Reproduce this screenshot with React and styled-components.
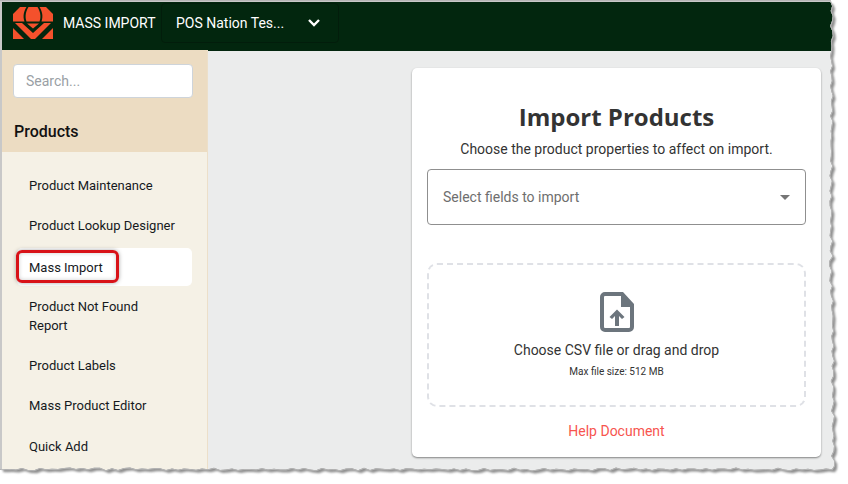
import React from "react";
import styled, { createGlobalStyle } from "styled-components";

const menuItems = [
  { label: "Product Maintenance" },
  { label: "Product Lookup Designer" },
  { label: "Mass Import", active: true },
  { label: "Product Not Found\nReport" },
  { label: "Product Labels" },
  { label: "Mass Product Editor" },
  { label: "Quick Add" },
];

// rough torn paper outline, same shape on every render
const jag = (i, size) => (Math.sin(i * 12.9898) * 43758.5453 % 1) * size;

const tornOutline = () => {
  const points = ["0,1", "830,1"];
  for (let y = 6; y < 468; y += 5) {
    const drift = y > 300 ? 1.5 : 0;
    points.push(`${(831 + drift + jag(y, 1.8)).toFixed(1)},${y}`);
  }
  for (let x = 832; x > 0; x -= 6) {
    points.push(`${x},${(469 + jag(x + 3, 1.4)).toFixed(1)}`);
  }
  points.push("0,469");
  return `M${points.join("L")}Z`;
};

const outline = tornOutline();

const GlobalStyle = createGlobalStyle`
  html, body {
    margin: 0;
    padding: 0;
    background: #fff;
    overflow: hidden;
  }
  body {
    font-family: Roboto, "Liberation Sans", sans-serif;
  }
`;

const Logo = () => (
  <svg width="40" height="32" viewBox="0 0 40 32" aria-hidden="true">
    <g fill="#f4512c">
      <path d="M7 0h6.500C11 4 9.500 9 11.500 14.500H0V7z" />
      <path d="M15.500 0h9C27 4 28.500 9 26.500 14.500h-13C11.500 9 13 4 15.500 0z" />
      <path d="M33 0h-6.500C29 4 30.500 9 28.500 14.500H40V7z" />
      <path d="M14 16.500h12l-6 5z" />
      <path d="M2 16h7l11 10 11-10h7L22 32h-4z" />
      <path d="M0 21l11 11H0z" />
      <path d="M40 21v11H29z" />
    </g>
  </svg>
);

const FileUpload = () => (
  <svg width="34" height="40" viewBox="0 0 34 40" aria-hidden="true">
    <path
      fill="#6c757d"
      fillRule="evenodd"
      d="M5 0h18l11 12v23a5 5 0 0 1-5 5H5a5 5 0 0 1-5-5V5a5 5 0 0 1 5-5zM5 4a1 1 0 0 0-1 1v30a1 1 0 0 0 1 1h24a1 1 0 0 0 1-1V15h-9V4z"
    />
    <path fill="#6c757d" d="M17 17.500l7.500 7.500-2.500 2-3-3v10h-4V24l-3 3-2.500-2z" />
  </svg>
);

const App = () => (
  <Page>
    <GlobalStyle />
    <Shot>
      <Header>
        <LogoWrap>
          <Logo />
        </LogoWrap>
        <PageName>MASS IMPORT</PageName>
        <StoreSelect>
          <span>POS Nation Tes...</span>
          <svg width="14" height="10" viewBox="0 0 14 10" aria-hidden="true">
            <path d="M2 2l5 5 5-5" fill="none" stroke="#fff" strokeWidth="2.400" />
          </svg>
        </StoreSelect>
      </Header>
      <Body>
        <Sidebar>
          <SideTop>
            <Search placeholder="Search..." />
            <SideTitle>Products</SideTitle>
          </SideTop>
          <Menu>
            {menuItems.map((item) => (
              <MenuItem key={item.label} $active={item.active}>
                <MenuLabel>{item.label}</MenuLabel>
              </MenuItem>
            ))}
          </Menu>
        </Sidebar>
        <Main>
          <Card>
            <Title>Import Products</Title>
            <Subtitle>Choose the product properties to affect on import.</Subtitle>
            <FieldSelect>
              <span>Select fields to import</span>
              <Caret />
            </FieldSelect>
            <DropZone>
              <FileUpload />
              <DropText>Choose CSV file or drag and drop</DropText>
              <DropHint>Max file size: 512 MB</DropHint>
            </DropZone>
            <HelpLink>Help Document</HelpLink>
          </Card>
        </Main>
      </Body>
    </Shot>
    <TornEdge viewBox="0 0 848 484" aria-hidden="true">
      <defs>
        <filter id="tornBlur" x="-5%" y="-5%" width="110%" height="110%">
          <feGaussianBlur stdDeviation="0.900" />
        </filter>
        <clipPath id="outsideShot">
          <path clipRule="evenodd" d={`M0 0H848V484H0Z${outline}`} />
        </clipPath>
      </defs>
      <g clipPath="url(#outsideShot)">
        <rect width="848" height="484" fill="#fff" />
        <path d={outline} fill="#8f8f8f" filter="url(#tornBlur)" transform="translate(3 3)" />
        <path d={outline} fill="none" stroke="#b5b5b5" strokeWidth="2" />
      </g>
      <rect x="0" y="1" width="2" height="468" fill="#c8c8c8" />
      <rect x="0" y="1" width="830" height="1" fill="#c8c8c8" />
    </TornEdge>
  </Page>
);

export default App;

const Page = styled.div`
  position: relative;
  width: 848px;
  height: 484px;
  overflow: hidden;
`;

const Shot = styled.div`
  display: flex;
  flex-direction: column;
  width: 846px;
  height: 482px;
  margin: 2px 0 0 2px;
  background: #ebecec;
`;

const Header = styled.header`
  display: flex;
  align-items: center;
  flex: 0 0 49px;
  background: #02260e;
`;

const LogoWrap = styled.div`
  display: flex;
  margin: -8px 10px 0 11px;
`;

const PageName = styled.div`
  width: 98px;
  margin-top: -8px;
  font-size: 14px;
  color: #fff;
`;

const StoreSelect = styled.div`
  display: flex;
  align-items: center;
  justify-content: space-between;
  box-sizing: border-box;
  width: 178px;
  height: 40px;
  margin-top: -8px;
  padding: 0 17px 0 14px;
  border: 1px solid #021d0b;
  border-radius: 4px;
  font-size: 14px;
  color: #fff;
`;

const Body = styled.div`
  display: flex;
  flex: 1;
  min-height: 0;
`;

const Sidebar = styled.aside`
  flex: 0 0 205px;
  display: flex;
  flex-direction: column;
  box-sizing: border-box;
  margin-top: -1px;
  background: #f5f1e6;
  border-right: 1px solid #ecdfc9;
`;

const SideTop = styled.div`
  flex: 0 0 102px;
  box-sizing: border-box;
  padding: 14px 14px 0 11px;
  background: #ecdcc2;
`;

const Search = styled.input`
  display: block;
  box-sizing: border-box;
  width: 180px;
  height: 34px;
  padding: 0 12px;
  border: 1px solid #ced4da;
  border-radius: 4px;
  background: #fff;
  font-family: Roboto, sans-serif;
  font-size: 14px;
  outline: none;

  &::placeholder {
    color: #9a9fa5;
    opacity: 1;
  }
`;

const SideTitle = styled.h2`
  margin: 24px 0 0 1px;
  font-size: 16px;
  line-height: 20px;
  font-weight: 500;
  color: #111;
`;

const Menu = styled.nav`
  display: flex;
  flex-direction: column;
  gap: 2.500px;
  padding: 14.400px 15px 0 15px;
`;

const MenuItem = styled.div`
  position: relative;
  display: flex;
  align-items: center;
  min-height: 38px;
  box-sizing: border-box;
  padding: 9px 12px;
  border-radius: 5px;
  background: ${({ $active }) => ($active ? "#fff" : "transparent")};

  ${({ $active }) =>
    $active &&
    `
    margin: 1px 0 -1px;

    &::after {
      content: "";
      position: absolute;
      left: -1px;
      top: 2px;
      width: 103px;
      height: 33px;
      box-sizing: border-box;
      border: 3px solid #d81218;
      border-radius: 6px;
      box-shadow: 0 0 4px rgba(0, 0, 0, 0.35), inset 0 0 4px rgba(0, 0, 0, 0.2);
    }
  `}
`;

const MenuLabel = styled.span`
  font-size: 13px;
  line-height: 19px;
  white-space: pre-line;
  color: #16191d;
`;

const Main = styled.main`
  flex: 1;
  padding: 17px 0 0 204px;
`;

const Card = styled.section`
  display: flex;
  flex-direction: column;
  align-items: center;
  box-sizing: border-box;
  width: 409px;
  height: 389px;
  padding: 32px 15px 0;
  border-radius: 5px;
  background: #fff;
  box-shadow: 0 1px 2px rgba(0, 0, 0, 0.45);
`;

const Title = styled.h1`
  margin: 0;
  font-family: "Open Sans", sans-serif;
  font-size: 24px;
  line-height: 34px;
  font-weight: 700;
  color: #333;
`;

const Subtitle = styled.p`
  margin: 5px 0 0;
  font-size: 14px;
  line-height: 20px;
  color: #333;
`;

const FieldSelect = styled.div`
  display: flex;
  align-items: center;
  justify-content: space-between;
  box-sizing: border-box;
  width: 379px;
  height: 56px;
  margin-top: 10px;
  padding: 0 15px;
  border: 1px solid #8f8f8f;
  border-radius: 4px;
  font-size: 14px;
  color: #6e6e6e;
`;

const Caret = styled.i`
  width: 0;
  height: 0;
  border-left: 5px solid transparent;
  border-right: 5px solid transparent;
  border-top: 5px solid #757575;
`;

const DropZone = styled.div`
  display: flex;
  flex-direction: column;
  align-items: center;
  box-sizing: border-box;
  width: 379px;
  height: 144px;
  margin-top: 38px;
  padding-top: 27px;
  border: 2px dashed #dfe1e6;
  border-radius: 10px;
`;

const DropText = styled.div`
  margin-top: 9px;
  font-size: 14px;
  line-height: 18px;
  color: #333;
`;

const DropHint = styled.div`
  margin-top: 7px;
  font-size: 10px;
  line-height: 12px;
  color: #333;
`;

const HelpLink = styled.a`
  margin-top: 15px;
  font-size: 14px;
  line-height: 18px;
  color: #f7554f;
`;

const TornEdge = styled.svg`
  position: absolute;
  inset: 0;
  width: 848px;
  height: 484px;
  pointer-events: none;
`;
